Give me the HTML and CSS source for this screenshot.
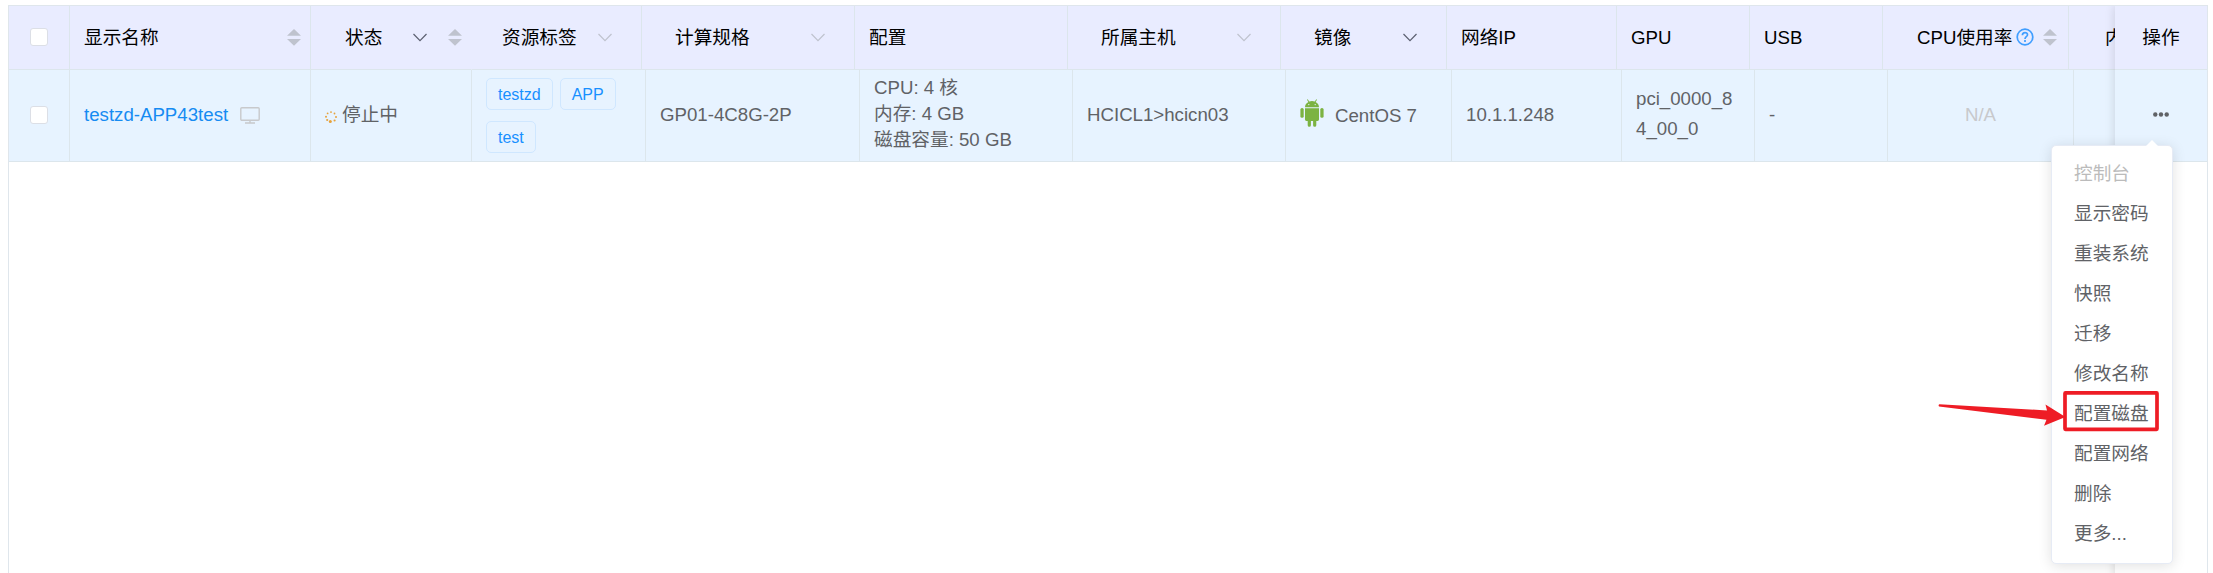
FILE: index.html
```html
<!DOCTYPE html>
<html lang="zh-CN">
<head>
<meta charset="utf-8">
<title>云主机</title>
<link rel="stylesheet" href="styles.css">
</head>
<body>
<svg class="defs" width="0" height="0">
  <symbol id="sort" viewBox="0 0 14 17"><path d="M7 0L14 6.8H0zM0 10H14L7 16.8z" fill="#bfc3ce"/></symbol>
  <symbol id="chev" viewBox="0 0 14 9"><path d="M.5 1L7 7.7L13.5 1" fill="none" stroke="currentColor" stroke-width="1.2"/></symbol>
</svg>
<div class="table">
  <div class="row head">
    <div class="cell check"><span class="box"></span></div>
    <div class="cell name"><span>显示名称</span><svg class="sort"><use href="#sort"/></svg></div>
    <div class="cell state"><span>状态</span><svg class="chev dark"><use href="#chev"/></svg><svg class="sort"><use href="#sort"/></svg></div>
    <div class="cell tagcol"><span>资源标签</span><svg class="chev"><use href="#chev"/></svg></div>
    <div class="cell spec low"><span>计算规格</span><svg class="chev"><use href="#chev"/></svg></div>
    <div class="cell low">配置</div>
    <div class="cell host low"><span>所属主机</span><svg class="chev"><use href="#chev"/></svg></div>
    <div class="cell image low"><span>镜像</span><svg class="chev dark"><use href="#chev"/></svg></div>
    <div class="cell">网络IP</div>
    <div class="cell">GPU</div>
    <div class="cell">USB</div>
    <div class="cell cpu"><span>CPU使用率</span><svg class="help" viewBox="0 0 18 18"><circle cx="9" cy="9" r="7.8"/><path d="M6.4 7.2C6.4 3.7 11.7 3.8 11.5 7C11.3 8.7 9 8.7 9 10.9M9 12V14"/></svg><svg class="sort"><use href="#sort"/></svg></div>
    <div class="cell mem">内</div>
    <div class="cell action">操作</div>
  </div>
  <div class="row body">
    <div class="cell check"><span class="box"></span></div>
    <div class="cell"><a class="link">testzd-APP43test</a><svg class="monitor" viewBox="0 0 20 17"><rect x=".8" y=".8" width="18.4" height="12.4" rx="1"/><path d="M10 13V16M5 16H15"/></svg></div>
    <div class="cell"><svg class="loader" viewBox="0 0 12 12"><circle cx="6" cy="1.1" r=".9"/><circle cx="9.5" cy="2.5" r=".9"/><circle cx="11" cy="6" r="1"/><circle cx="9.6" cy="9.5" r="1.1"/><circle cx="5.3" cy="10.5" r="1.5"/><circle cx="2.2" cy="9" r="1.1"/><circle cx="1" cy="5.8" r="1"/><circle cx="2.6" cy="2.4" r=".9"/></svg>停止中</div>
    <div class="cell tags"><span class="tag">testzd</span><span class="tag">APP</span><span class="tag">test</span></div>
    <div class="cell">GP01-4C8G-2P</div>
    <div class="cell config">CPU: 4 核<br>内存: 4 GB<br>磁盘容量: 50 GB</div>
    <div class="cell">HCICL1&gt;hcicn03</div>
    <div class="cell os"><svg class="android" viewBox="0 0 24 28"><path d="M5 8.2C5 5.8 6.4 3.9 8.4 2.9L7 .8L7.7.3L9.2 2.5Q12 1.6 14.8 2.5L16.3.3L17 .8L15.6 2.9C17.6 3.9 19 5.8 19 8.2z"/><path d="M5 9.3H19V20.6Q19 22 17.6 22H16.3V26.2Q16.3 27.7 14.7 27.7T13.1 26.2V22H10.9V26.2Q10.9 27.7 9.3 27.7T7.7 26.2V22H6.4Q5 22 5 20.6z"/><rect x=".4" y="9" width="3.3" height="9.8" rx="1.6"/><rect x="20.3" y="9" width="3.3" height="9.8" rx="1.6"/><g fill="#e7f3ff"><circle cx="8.8" cy="5.6" r=".7"/><circle cx="15.2" cy="5.6" r=".7"/></g></svg><span>CentOS 7</span></div>
    <div class="cell">10.1.1.248</div>
    <div class="cell gpu">pci_0000_8<br>4_00_0</div>
    <div class="cell">-</div>
    <div class="cell na">N/A</div>
    <div class="cell"></div>
    <div class="cell action"><svg class="dots" viewBox="0 0 16 5"><circle cx="2.3" cy="2.5" r="2.2"/><circle cx="8" cy="2.5" r="2.2"/><circle cx="13.7" cy="2.5" r="2.2"/></svg></div>
  </div>
  <div class="fixed-shade"></div>
</div>
<ul class="menu">
  <li class="disabled">控制台</li>
  <li>显示密码</li>
  <li>重装系统</li>
  <li>快照</li>
  <li>迁移</li>
  <li>修改名称</li>
  <li>配置磁盘</li>
  <li>配置网络</li>
  <li>删除</li>
  <li>更多...</li>
</ul>
<svg class="callout" viewBox="0 0 226 44">
  <path d="M2 16.4Q1 15 2.4 14.2L110 20.5L108.5 14.6L128.5 27L107 35.8L109.5 29.8z" fill="#ee1c25"/>
  <rect x="128" y="2.9" width="92" height="36.4" rx=".5" fill="none" stroke="#ee1c25" stroke-width="3.7"/>
</svg>
</body>
</html>
```
FILE: styles.css
```css
* { box-sizing: border-box; }
body {
  margin: 0;
  height: 573px;
  overflow: hidden;
  position: relative;
  background: #fff;
  color: #606266;
  font: 18.67px/27px "Liberation Sans", "Noto Sans CJK SC", sans-serif;
}
.defs { position: absolute; }
svg { flex: none; display: block; }

.table {
  position: relative;
  width: 2200px;
  height: 568px;
  margin: 5px 0 0 8px;
  border: 1px solid #dfe6ec;
  border-bottom: 0;
  overflow: hidden;
}
.row { display: grid; }
.head {
  height: 64px;
  grid-template-columns: 61px 241px 161px 170px 213px 213px 213px 166px 170px 133px 133px 186px 46px 92px;
  background: #e9ecff;
  color: #000;
}
.body {
  height: 92px;
  grid-template-columns: 61px 241px 161px 174px 214px 213px 213px 166px 170px 133px 133px 186px 41px 92px;
  background: #e7f3ff;
}
.cell {
  display: flex;
  align-items: center;
  min-width: 0;
  padding-left: 14px;
  border-right: 1px solid #dce6ec;
  border-bottom: 1px solid #dce6ec;
  white-space: nowrap;
}
.head .cell { padding-bottom: 1px; }
.body .cell { padding-bottom: 3px; }
.body .check { padding-bottom: 1px; }
.cell:nth-child(13), .cell:last-child { border-right: 0; }
.check { padding-left: 21px; }
.box {
  width: 18px;
  height: 18px;
  border: 1px solid #dcdfe6;
  border-radius: 3px;
  background: #fff;
}
.sort { width: 14px; height: 17px; }
.chev { width: 14px; height: 9px; color: #bfc3ce; }
.dark { color: #5c6070; }

.name { justify-content: space-between; padding-right: 9px; }
.state { padding-left: 34px; gap: 21px; }
.state .chev { margin-left: 10px; }
.head .state { border-right-color: #e9ecff; }
.tagcol { padding-left: 30px; gap: 21px; }
.low { padding-top: 1px; }
.spec, .host, .image { justify-content: space-between; padding-left: 33px; padding-right: 29px; }
.cpu { padding-left: 34px; }
.help { width: 18px; height: 18px; margin: 0 9px 0 4px; fill: none; stroke: #409eff; stroke-width: 1.7; }
.mem { padding-left: 36px; overflow: hidden; }
.action { padding-left: 0; justify-content: center; }

.link { color: #168bf2; }
.monitor { width: 20px; height: 17px; margin: 2px 0 0 12px; fill: none; stroke: #c8c9cc; stroke-width: 1.4; }
.loader { width: 12px; height: 12px; margin: 6px 5px 0 0; fill: #e6a23c; }
.tags { flex-wrap: wrap; align-content: center; gap: 11px 7px; }
.body .tags { padding-bottom: 0; }
.tag {
  height: 32px;
  padding: 0 11px;
  border: 1px solid #cfe7ff;
  border-radius: 5px;
  color: #1890ff;
  font-size: 16px;
  line-height: 31px;
}
.config { line-height: 26px; }
.gpu { line-height: 30px; }
.android { width: 24px; height: 28px; margin-right: 11px; margin-top: -3px; fill: #7cb342; }
.os span { padding-top: 2px; }
.na { justify-content: center; padding-left: 0; color: #c8c9cc; }
.dots { width: 16px; height: 5px; fill: #606266; }

.fixed-shade {
  position: absolute;
  top: 0;
  right: 0;
  width: 92px;
  height: 600px;
  box-shadow: 0 0 10px rgba(0, 0, 0, .14);
}

.menu {
  position: absolute;
  left: 2051px;
  top: 145px;
  width: 122px;
  height: 419px;
  margin: 0;
  padding: 8px 0 0 22px;
  border: 1px solid #e6ebf5;
  border-radius: 5px;
  background: #fff;
  box-shadow: 0 2px 14px rgba(0, 0, 0, .12);
  list-style: none;
  line-height: 40.05px;
}
.menu::before {
  content: "";
  position: absolute;
  top: -6px;
  left: 94px;
  border: 6px solid transparent;
  border-top: 0;
  border-bottom-color: #fff;
}
.disabled { color: #bbb; }
.callout { position: absolute; left: 1937px; top: 390px; width: 226px; height: 44px; }
```
